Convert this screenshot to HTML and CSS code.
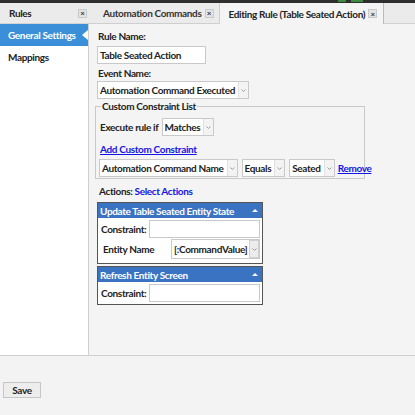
FILE: index.html
```html
<!DOCTYPE html>
<html>
<head>
<meta charset="utf-8">
<link rel="stylesheet" href="styles.css">
</head>
<body>
<div class="topstrip"><span class="green g1"></span><span class="green g2"></span></div>
<div class="main">
  <div class="left">
    <div class="left-head">
      <span class="left-title">Rules</span>
      <span class="xbox">×</span>
    </div>
    <div class="left-body">
      <div class="nav-item active">General Settings<span class="notch"></span></div>
      <div class="nav-item">Mappings</div>
    </div>
  </div>
  <div class="right">
    <div class="tabbar">
      <div class="tab">Automation Commands <span class="xbox">×</span></div>
      <div class="tab active">Editing Rule (Table Seated Action) <span class="xbox">×</span></div>
    </div>
    <div class="content">
      <div class="label first">Rule Name:</div>
      <div class="input w-rule">Table Seated Action</div>
      <div class="label second">Event Name:</div>
      <div class="select w-event"><span class="sel-text">Automation Command Executed</span><span class="arrow"><svg width="5" height="3" viewBox="0 0 5 3"><path d="M0.5 0.5 L2.5 2.5 L4.5 0.5" fill="none" stroke="#9a9a9a" stroke-width="1"/></svg></span></div>
      <div class="constraints">
        <div class="legend">Custom Constraint List</div>
        <div class="row r1">
          <span class="lbl">Execute rule if</span>
          <div class="select"><span class="sel-text">Matches</span><span class="arrow"><svg width="5" height="3" viewBox="0 0 5 3"><path d="M0.5 0.5 L2.5 2.5 L4.5 0.5" fill="none" stroke="#9a9a9a" stroke-width="1"/></svg></span></div>
        </div>
        <a class="link add">Add Custom Constraint</a>
        <div class="row r2">
          <div class="select"><span class="sel-text">Automation Command Name</span><span class="arrow"><svg width="5" height="3" viewBox="0 0 5 3"><path d="M0.5 0.5 L2.5 2.5 L4.5 0.5" fill="none" stroke="#9a9a9a" stroke-width="1"/></svg></span></div>
          <div class="select"><span class="sel-text">Equals</span><span class="arrow"><svg width="5" height="3" viewBox="0 0 5 3"><path d="M0.5 0.5 L2.5 2.5 L4.5 0.5" fill="none" stroke="#9a9a9a" stroke-width="1"/></svg></span></div>
          <div class="select"><span class="sel-text">Seated</span><span class="arrow"><svg width="5" height="3" viewBox="0 0 5 3"><path d="M0.5 0.5 L2.5 2.5 L4.5 0.5" fill="none" stroke="#9a9a9a" stroke-width="1"/></svg></span></div>
          <a class="link">Remove</a>
        </div>
      </div>
      <div class="actions-line"><span class="lbl">Actions:</span> <a class="link plain">Select Actions</a></div>
      <div class="abox a1">
        <div class="abox-head"><span>Update Table Seated Entity State</span><span class="tri"></span></div>
        <div class="abox-body">
          <div class="arow"><span class="albl">Constraint:</span><div class="input grow"></div></div>
          <div class="arow tallrow"><span class="albl ename">Entity Name</span><div class="select grow2"><span class="sel-text">[:CommandValue]</span><span class="arrow tall"><svg width="5" height="3" viewBox="0 0 5 3"><path d="M0.5 0.5 L2.5 2.5 L4.5 0.5" fill="none" stroke="#9a9a9a" stroke-width="1"/></svg></span></div></div>
        </div>
      </div>
      <div class="abox a2">
        <div class="abox-head"><span>Refresh Entity Screen</span><span class="tri"></span></div>
        <div class="abox-body">
          <div class="arow"><span class="albl">Constraint:</span><div class="input grow"></div></div>
        </div>
      </div>
    </div>
  </div>
</div>
<div class="bottombar">
  <button class="save">Save</button>
</div>
</body>
</html>
```
FILE: styles.css
```css
* { box-sizing: border-box; }
html, body { margin: 0; padding: 0; }
body {
  width: 415px;
  height: 415px;
  overflow: hidden;
  background: #f3f3f3;
  font-family: "Lato", "Noto Sans", sans-serif;
  font-size: 10px;
  letter-spacing: -0.35px;
  font-weight: 700;
  color: #222;
  white-space: nowrap;
}
.topstrip { height: 3px; background: #2f2f2f; display: flex; padding-left: 338px; gap: 5px; }
.green { display: block; height: 2px; background: #3c8a3c; }
.g1 { width: 8px; }
.g2 { width: 12px; }
.main { display: flex; height: 353px; border-bottom: 1px solid #cfcfcf; }
.left { width: 95px; display: flex; flex-direction: column; flex: none; }
.left-head {
  height: 21px;
  background: #ebebeb;
  border-bottom: 1px solid #d4d4d4;
  border-right: 1px solid #c8c8c8;
  display: flex;
  align-items: center;
  justify-content: space-between;
  padding: 0 7px 0 9px;
}
.xbox {
  display: inline-flex;
  align-items: center;
  justify-content: center;
  width: 9px;
  height: 9px;
  border: 1px solid #c9c9c9;
  background: #e4e4e4;
  font-size: 8px;
  line-height: 1;
  letter-spacing: 0;
  color: #333;
}
.left-body {
  flex: 1;
  width: 89px;
  background: #fff;
  border-right: 1px solid #cfcfcf;
}
.nav-item {
  position: relative;
  height: 22px;
  line-height: 22px;
  padding-left: 8px;
  color: #222;
}
.nav-item.active { background: #3a8fd8; color: #fff; }
.notch {
  position: absolute;
  right: 0;
  top: 6px;
  width: 0;
  height: 0;
  border-top: 5px solid transparent;
  border-bottom: 5px solid transparent;
  border-right: 6px solid #fff;
}
.right { flex: 1; display: flex; flex-direction: column; margin-left: -6px; min-width: 0; }
.tabbar {
  height: 21px;
  background: #ebebeb;
  display: flex;
  align-items: stretch;
  border-bottom: 1px solid #cfcfcf;
  padding-left: 6px;
}
.tab {
  display: flex;
  align-items: center;
  gap: 3px;
  padding: 0 5px 0 8px;
  color: #333;
}
.tab.active {
  background: #f4f4f4;
  border-left: 1px solid #cfcfcf;
  border-right: 1px solid #bbb;
  margin-bottom: -1px;
  padding-left: 9px;
  padding-right: 6px;
  color: #222;
}
.content {
  flex: 1;
  background: #f4f4f4;
  padding: 5px 0 0 8px;
  display: flex;
  flex-direction: column;
  align-items: flex-start;
}
.label { height: 14px; line-height: 14px; padding-left: 1px; }
.label.second { margin-top: 2px; }
.input {
  background: #fff;
  border: 1px solid #c9c9c9;
  height: 18px;
  line-height: 16px;
  padding-left: 2px;
}
.w-rule { width: 109px; margin-top: 3px; }
.select {
  display: flex;
  align-items: stretch;
  background: #fff;
  border: 1px solid #c9c9c9;
  height: 18px;
}
.sel-text { padding: 0 3px 0 2px; line-height: 16px; }
.arrow {
  width: 10px;
  flex: none;
  border-left: 1px solid #e0e0e0;
  background: #f3f3f3;
  display: flex;
  align-items: center;
  justify-content: center;
}
.arrow svg { display: block; }
.w-event { margin-top: 1px; }
.constraints {
  margin: 7px 0 0 -2px;
  width: 270px;
  border: 1px solid #c9c9c9;
  padding: 0 3px 1px 3px;
}
.legend {
  width: fit-content;
  margin: -7px 0 0 2px;
  padding: 0 1px;
  height: 12px;
  line-height: 12px;
  background: #f4f4f4;
}
.row { display: flex; align-items: center; gap: 4px; height: 18px; }
.r1 { margin-top: 6px; gap: 3px; padding-left: 1px; }
.r2 { margin-top: 3px; gap: 4px; }
.r2 .link { margin-left: -1px; }
.link { color: #1414e6; text-decoration: underline; cursor: pointer; }
.link.plain { text-decoration: none; }
.add { display: block; margin: 6px 0 0 1px; height: 14px; line-height: 14px; }
.actions-line { margin: 5px 0 0 2px; height: 14px; line-height: 14px; }
.abox {
  width: 166px;
  border: 1px solid #555;
  background: #fff;
}
.a1 { margin-top: 4px; }
.a2 { margin-top: 2px; }
.abox-head {
  height: 15px;
  background: #3b73c3;
  color: #fff;
  display: flex;
  align-items: center;
  justify-content: space-between;
  padding: 0 4px 0 2px;
}
.tri {
  width: 0; height: 0;
  border-left: 3px solid transparent;
  border-right: 3px solid transparent;
  border-bottom: 3px solid #fff;
}
.abox-body { padding: 2px 2px 2px 2px; }
.a1 .abox-body { padding-bottom: 4px; }
.arow { display: flex; align-items: center; gap: 1px; height: 18px; }
.arow.tallrow { height: 20px; margin-top: 1px; }
.albl { width: 48px; flex: none; padding-left: 1px; }
.albl.ename { width: 70px; padding-left: 3px; }
.grow { flex: 1; }
.grow2 { flex: 1; height: 20px; min-width: 0; }
.grow2 .sel-text { flex: 1; min-width: 0; overflow: hidden; padding-left: 2px; line-height: 18px; }
.arrow.tall { width: 10px; border: 1px solid #d0d0d0; background: #ececec; }
.bottombar { height: 58px; background: #f3f3f3; padding: 26px 0 0 3px; }
.save {
  width: 38px;
  height: 16px;
  border: 1px solid #c6c6c6;
  background: #ededed;
  font-family: inherit;
  font-size: 10px;
  letter-spacing: -0.35px;
  font-weight: 700;
  color: #222;
  padding: 0;
}
```
